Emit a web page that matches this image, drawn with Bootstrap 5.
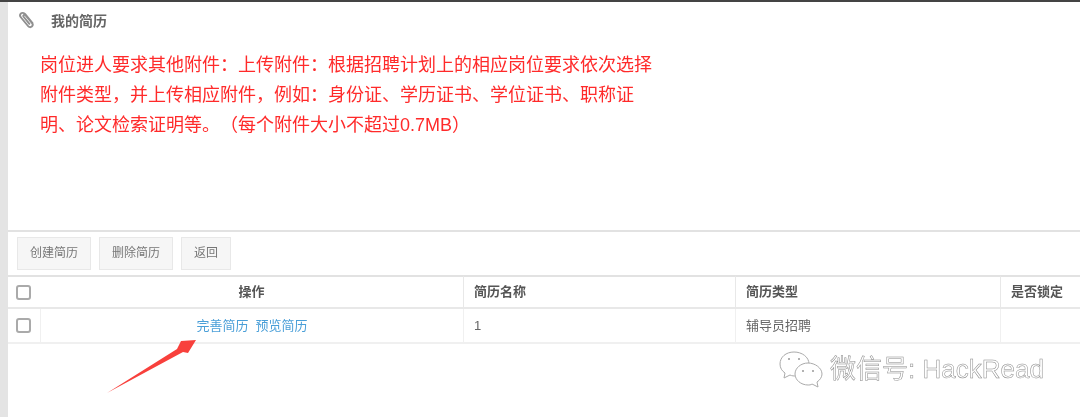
<!DOCTYPE html>
<html lang="en">
<head>
    <meta charset="UTF-8">
    <title>我的简历</title>
    <link href="https://cdn.jsdelivr.net/npm/bootstrap@5.3.0/dist/css/bootstrap.min.css" rel="stylesheet">
    <style>
        html, body { height: 417px; overflow: hidden; }
        body { font-family: "Liberation Sans", "Noto Sans CJK SC", sans-serif; font-size: 13px; color: #666; background: #fff; border-top: 2px solid #444; }
        .page-shell { height: 415px; border-left: 8px solid #e4e4e4; position: relative; filter: blur(.35px); }
        .resume-head { height: 39px; padding: 9px 0 0 11px; gap: 16px; font-size: 14px; font-weight: 700; color: #666; }
        .notice-box { width: 650px; height: 189px; padding: 9px 0 0 32px; color: #ff2a2a; font-size: 18px; line-height: 30px; text-spacing-trim: space-all; }
        .tool-bar { height: 45px; border-top: 2px solid #e2e2e2; padding: 5px 0 0 9px; gap: 8px; }
        .tool-btn { height: 33px; padding: 0 12px; font-size: 12px; line-height: 31px; color: #777; background: #f6f6f6; border: 1px solid #e8e8e8; border-radius: 0; }
        .resume-grid { display: grid; grid-template-columns: 32px 423px 272px 265px 1fr; }
        .grid-cell { padding: 0 10px; display: flex; align-items: center; }
        .head-row .grid-cell { height: 34px; font-weight: 700; color: #555; border-top: 2px solid #e2e2e2; border-bottom: 2px solid #e8e8e8; border-left: 1px solid #e8e8e8; }
        .body-row .grid-cell { height: 35px; color: #666; border-bottom: 2px solid #f0f0f0; border-left: 1px solid #f0f0f0; }
        .head-row .grid-cell:first-child, .body-row .grid-cell:first-child, .head-row .grid-cell:nth-child(2) { border-left: 0; }
        .head-row .grid-cell:first-child, .body-row .grid-cell:first-child { padding-left: 8px; }
        .tick-box { width: 15px; height: 15px; flex: none; border: 2px solid #aaa; border-radius: 3px; background: #fff; }
        .link-pair { gap: 7px; }
        .link-pair a { color: #4a9fd8; text-decoration: none; }
        .mark-arrow { position: absolute; left: 99px; top: 336px; }
        .wm-mark { position: absolute; left: 771px; top: 348px; gap: 7px; font-size: 26px; line-height: 36px; color: #fff; -webkit-text-stroke: 0.5px #8a8a8a; }
    </style>
</head>
<body>

    <div class="page-shell">
        <!-- Title -->
        <div class="resume-head d-flex align-items-start">
            <svg width="16" height="18" viewBox="0 0 16 18" fill="none" stroke="#8f8f8f" stroke-width="1.9" stroke-linecap="round" stroke-linejoin="round">
                <path d="M13.5 12 L6.2 3.2 C4.8 1.5 2.9 1.6 1.9 2.5 C0.9 3.4 0.8 5 2 6.5 L9 15 C10 16.3 11.6 16.6 12.8 15.6 C14 14.6 13.9 13.1 12.9 11.9 L6.6 4.4 C6 3.7 5.2 3.6 4.7 4.1 C4.2 4.6 4.2 5.3 4.8 6 L10.4 12.8"/>
            </svg>
            <span>我的简历</span>
        </div>

        <!-- Notice -->
        <div class="notice-box">岗位进人要求其他附件：上传附件：根据招聘计划上的相应岗位要求依次选择附件类型，并上传相应附件，例如：身份证、学历证书、学位证书、职称证明、论文检索证明等。（每个附件大小不超过0.7MB）</div>

        <!-- Buttons -->
        <div class="tool-bar d-flex align-items-start">
            <button type="button" class="btn tool-btn">创建简历</button>
            <button type="button" class="btn tool-btn">删除简历</button>
            <button type="button" class="btn tool-btn">返回</button>
        </div>

        <!-- Table -->
        <div class="resume-grid head-row">
            <div class="grid-cell"><span class="tick-box"></span></div>
            <div class="grid-cell justify-content-center">操作</div>
            <div class="grid-cell">简历名称</div>
            <div class="grid-cell">简历类型</div>
            <div class="grid-cell">是否锁定</div>
        </div>
        <div class="resume-grid body-row">
            <div class="grid-cell"><span class="tick-box"></span></div>
            <div class="grid-cell justify-content-center"><span class="link-pair d-flex"><a href="#">完善简历</a><a href="#">预览简历</a></span></div>
            <div class="grid-cell">1</div>
            <div class="grid-cell">辅导员招聘</div>
            <div class="grid-cell"></div>
        </div>

        <!-- Arrow annotation -->
        <svg class="mark-arrow" width="92" height="60" viewBox="0 0 92 60">
            <path d="M0 55 L70 11 L74 3 L89 2 L81 15 L76 14 Z" fill="#f8403c"/>
        </svg>

        <!-- Watermark -->
        <div class="wm-mark d-flex align-items-center">
            <svg width="44" height="38" viewBox="0 0 44 38" fill="#fff" stroke="#aaa" stroke-width="1">
                <path d="M15 2 C7 2 1 7 1 14 C1 18 3 21 6 23 L5 28 L11 25 C13 26 15 26 17 26 C24 26 30 20 30 14 C30 7 23 2 15 2 Z"/>
                <path d="M29 13 C22 13 16 18 16 24 C16 30 22 35 29 35 C30 35 32 35 33 34 L39 37 L38 32 C41 30 43 27 43 24 C43 18 36 13 29 13 Z"/>
                <circle cx="10" cy="9" r="1" fill="#999" stroke="none"/>
                <circle cx="20" cy="9" r="1" fill="#999" stroke="none"/>
                <circle cx="24" cy="21" r="1" fill="#999" stroke="none"/>
                <circle cx="34" cy="21" r="1" fill="#999" stroke="none"/>
            </svg>
            <span>微信号: HackRead</span>
        </div>
    </div>

    <script src="https://cdn.jsdelivr.net/npm/bootstrap@5.3.0/dist/js/bootstrap.bundle.min.js"></script>
</body>
</html>
